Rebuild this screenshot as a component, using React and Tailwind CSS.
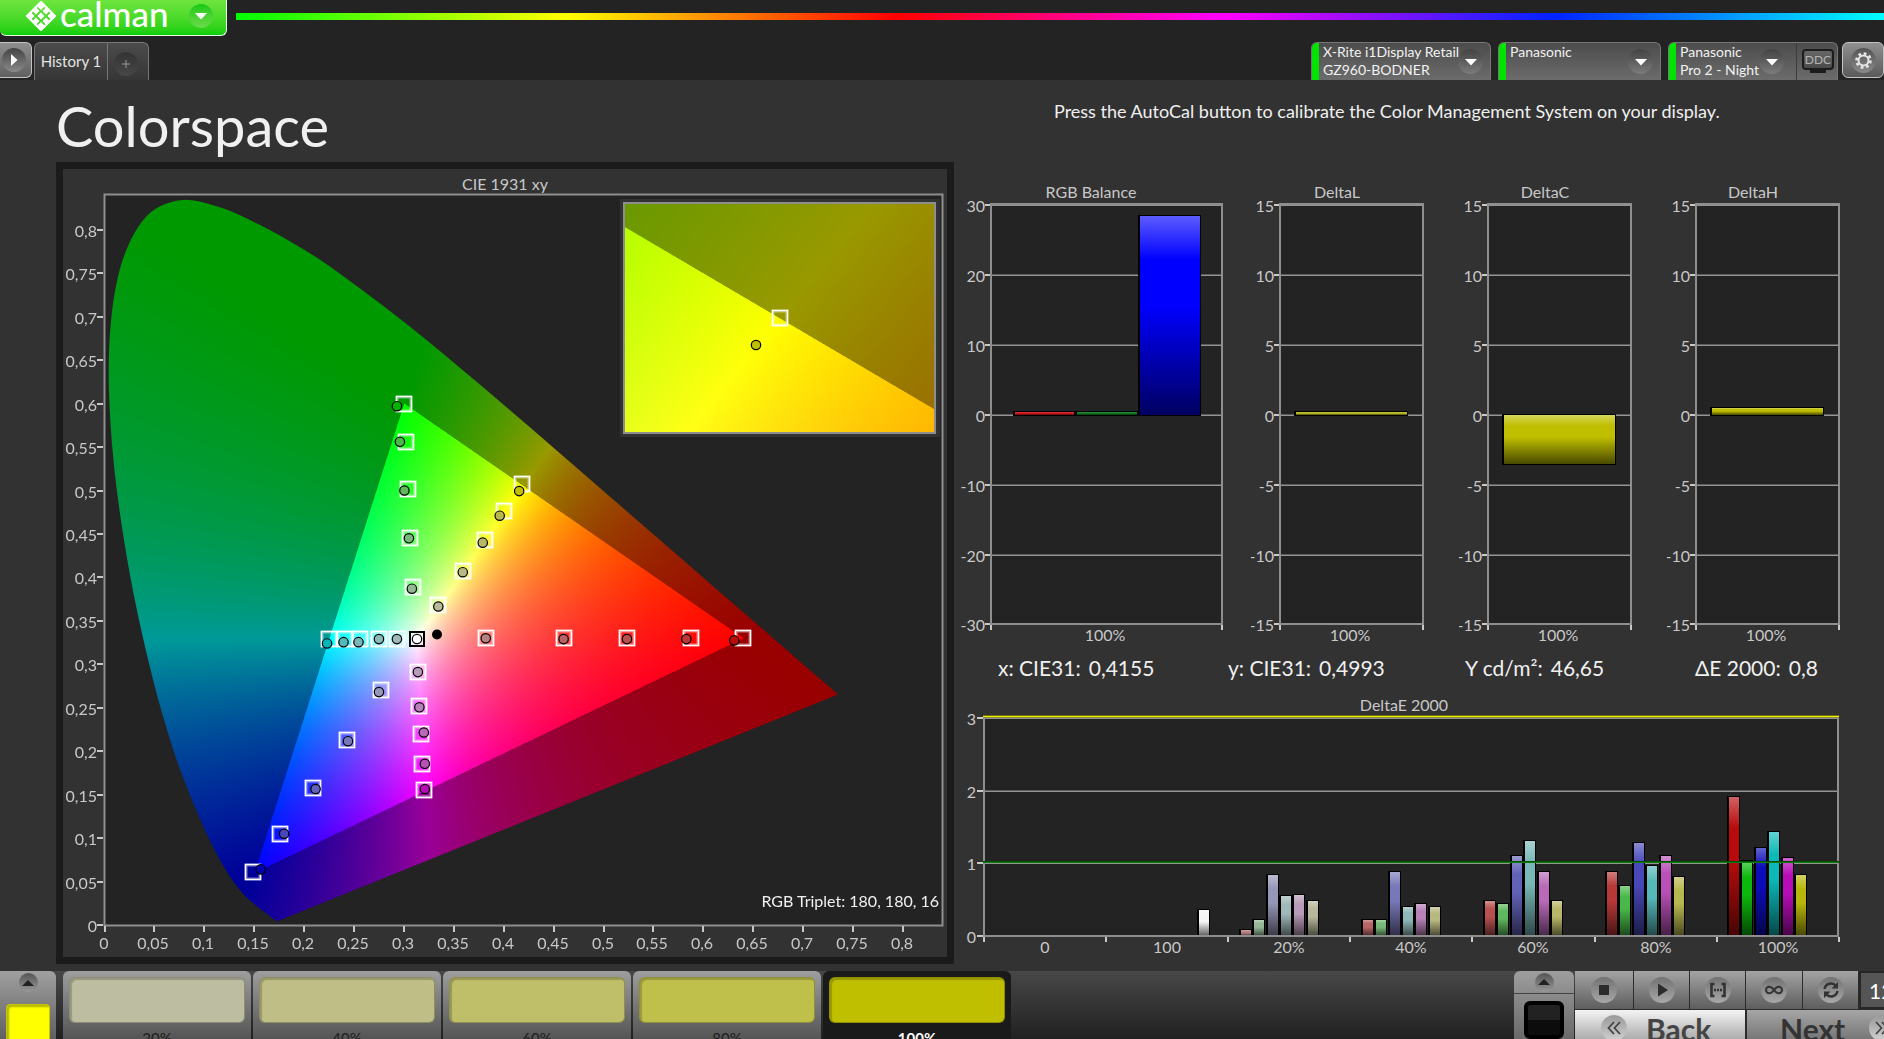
import { useEffect, useRef } from 'react';

// spectral locus, CIE 1931 2° observer
const LOCUS = [
  [0.1741, 0.005], [0.1726, 0.0048], [0.1714, 0.0051], [0.1689, 0.0069], [0.1644, 0.0109], [0.1566, 0.0177],
  [0.144, 0.0297], [0.1355, 0.0399], [0.1241, 0.0578], [0.1096, 0.0868], [0.0913, 0.1327], [0.0687, 0.2007],
  [0.0454, 0.295], [0.0235, 0.4127], [0.0082, 0.5384], [0.0039, 0.6548], [0.0139, 0.7502], [0.0389, 0.812],
  [0.0743, 0.8338], [0.1142, 0.8262], [0.1547, 0.8059], [0.1929, 0.7816], [0.2296, 0.7543], [0.3016, 0.6923],
  [0.3731, 0.6245], [0.4441, 0.5547], [0.5125, 0.4866], [0.5752, 0.4242], [0.627, 0.3725], [0.6658, 0.334],
  [0.6915, 0.3083], [0.719, 0.2809], [0.7347, 0.2653],
];

// fill, target xy, measured xy
const POINTS = [
  ['#00b400', [0.3, 0.6], [0.293, 0.597]],
  ['#48b848', [0.302, 0.556], [0.296, 0.556]],
  ['#5fb85f', [0.304, 0.502], [0.3005, 0.5]],
  ['#78b878', [0.3065, 0.445], [0.305, 0.445]],
  ['#96b896', [0.3095, 0.389], [0.308, 0.387]],
  ['#bfbf00', [0.4185, 0.507], [0.4155, 0.4993]],
  ['#b8b850', [0.4, 0.476], [0.396, 0.471]],
  ['#b8b869', [0.381, 0.443], [0.379, 0.44]],
  ['#b8b882', [0.359, 0.407], [0.359, 0.406]],
  ['#b8b89b', [0.3345, 0.368], [0.3345, 0.3665]],
  ['#b80c0c', [0.64, 0.33], [0.631, 0.3275]],
  ['#b83737', [0.5875, 0.33], [0.583, 0.329]],
  ['#b85050', [0.5235, 0.33], [0.5235, 0.329]],
  ['#b86464', [0.46, 0.33], [0.46, 0.329]],
  ['#b88282', [0.382, 0.33], [0.382, 0.33]],
  ['#00b8b8', [0.225, 0.329], [0.223, 0.324]],
  ['#55b8b8', [0.2405, 0.329], [0.2395, 0.3255]],
  ['#78b8b8', [0.256, 0.329], [0.2545, 0.3255]],
  ['#8cb8b8', [0.275, 0.329], [0.275, 0.329]],
  ['#a0b8b8', [0.293, 0.329], [0.293, 0.329]],
  ['#b89bb8', [0.314, 0.291], [0.314, 0.291]],
  ['#b882b8', [0.315, 0.252], [0.3155, 0.2505]],
  ['#b869b8', [0.317, 0.22], [0.32, 0.2215]],
  ['#b850b8', [0.318, 0.1855], [0.321, 0.1855]],
  ['#b80cb8', [0.32, 0.155], [0.321, 0.1565]],
  ['#9696b8', [0.277, 0.271], [0.275, 0.268]],
  ['#7878b8', [0.2425, 0.213], [0.244, 0.2115]],
  ['#6262b8', [0.2085, 0.158], [0.2115, 0.1565]],
  ['#4848b8', [0.176, 0.105], [0.18, 0.105]],
  ['#0000b4', [0.149, 0.061], [0.1565, 0.064]],
];

const DELTA_E = [
  { label: '0', bars: [] },
  { label: '100', bars: [[6, 0.37, '#f4f4f4']] },
  {
    label: '20%',
    bars: [[0, 0.1, '#b88282'], [1, 0.23, '#96b896'], [2, 0.85, '#9696b8'], [3, 0.56, '#a0b8b8'], [4, 0.58, '#b89bb8'], [5, 0.5, '#b8b89b']],
  },
  {
    label: '40%',
    bars: [[0, 0.23, '#b86464'], [1, 0.23, '#78b878'], [2, 0.89, '#7878b8'], [3, 0.41, '#8cb8b8'], [4, 0.45, '#b882b8'], [5, 0.41, '#b8b882']],
  },
  {
    label: '60%',
    bars: [[0, 0.5, '#b85050'], [1, 0.45, '#5fb85f'], [2, 1.11, '#6262b8'], [3, 1.32, '#78b8b8'], [4, 0.89, '#b869b8'], [5, 0.5, '#b8b869']],
  },
  {
    label: '80%',
    bars: [[0, 0.9, '#b83737'], [1, 0.7, '#48b848'], [2, 1.29, '#4848b8'], [3, 0.97, '#55b8b8'], [4, 1.12, '#b850b8'], [5, 0.83, '#b8b850']],
  },
  {
    label: '100%',
    bars: [[0, 1.93, '#b80c0c'], [1, 1.04, '#0cb80c'], [2, 1.23, '#0c0cb8'], [3, 1.44, '#0cb8b8'], [4, 1.08, '#b80cb8'], [5, 0.85, '#b8b80c']],
  },
];

const SWATCHES = [
  { label: '20%', color: 'bg-[#bdbda1]' },
  { label: '40%', color: 'bg-[#bebe86]' },
  { label: '60%', color: 'bg-[#bfbf6a]' },
  { label: '80%', color: 'bg-[#bfbf4b]' },
  { label: '100%', color: 'bg-[#bfbf00]', selected: true },
];

const comma = (n) => String(Number(n.toFixed(2))).replace('.', ',');

function GamutCanvas({ width, height, x0, x1, y0, y1 }) {
  const ref = useRef(null);

  useEffect(() => {
    const canvas = ref.current;
    const ctx = canvas.getContext('2d');
    const w = canvas.width;
    const h = canvas.height;
    const img = ctx.createImageData(w, h);
    for (let j = 0; j < h; j++) {
      const y = y1 - ((j + 0.5) / h) * (y1 - y0);
      for (let i = 0; i < w; i++) {
        const x = x0 + ((i + 0.5) / w) * (x1 - x0);
        const X = x / y;
        const Z = (1 - x - y) / y;
        let r = 3.2406 * X - 1.5372 - 0.4986 * Z;
        let g = -0.9689 * X + 1.8758 + 0.0415 * Z;
        let b = 0.0557 * X - 0.204 + 1.057 * Z;
        const inside = r >= 0 && g >= 0 && b >= 0;
        r = Math.max(r, 0);
        g = Math.max(g, 0);
        b = Math.max(b, 0);
        // colours the display can't reach are dimmed
        const k = (inside ? 255 : 153) / Math.max(r, g, b);
        const o = (j * w + i) * 4;
        img.data[o] = r * k;
        img.data[o + 1] = g * k;
        img.data[o + 2] = b * k;
        img.data[o + 3] = 255;
      }
    }
    ctx.putImageData(img, 0, 0);

    const pts = LOCUS.map(([x, y]) => [((x - x0) / (x1 - x0)) * w, ((y1 - y) / (y1 - y0)) * h]);
    ctx.globalCompositeOperation = 'destination-in';
    ctx.beginPath();
    ctx.moveTo(pts[0][0], pts[0][1]);
    for (let i = 0; i < pts.length - 1; i++) {
      const p0 = pts[Math.max(i - 1, 0)];
      const p1 = pts[i];
      const p2 = pts[i + 1];
      const p3 = pts[Math.min(i + 2, pts.length - 1)];
      ctx.bezierCurveTo(
        p1[0] + (p2[0] - p0[0]) / 6, p1[1] + (p2[1] - p0[1]) / 6,
        p2[0] - (p3[0] - p1[0]) / 6, p2[1] - (p3[1] - p1[1]) / 6,
        p2[0], p2[1],
      );
    }
    ctx.closePath();
    ctx.fill();
  }, [x0, x1, y0, y1]);

  return <canvas ref={ref} width={width * 2} height={height * 2} className="block h-full w-full" />;
}

function Target({ x, y, stroke = '#fff' }) {
  return (
    <>
      <rect x={x - 7} y={y - 7} width="14" height="14" fill="none" stroke={stroke} strokeOpacity="0.45" strokeWidth="3" />
      <rect x={x - 7.5} y={y - 7.5} width="15" height="15" fill="none" stroke={stroke} strokeWidth="1.4" />
    </>
  );
}

function Measured({ x, y, fill }) {
  return <circle cx={x} cy={y} r="4.7" fill={fill} stroke="#000" strokeWidth="1.2" />;
}

function CieChart() {
  const px = (x) => 41.5 + x * 998;
  const py = (y) => 756 - y * 869;
  const steps = Array.from({ length: 17 }, (_, i) => i * 0.05);

  return (
    <svg viewBox="0 0 884 788" className="block w-full text-[16px]" role="img" aria-label="CIE 1931 xy">
      <text x="442" y="21" textAnchor="middle" fill="#c8c8c8">CIE 1931 xy</text>
      <rect x="41" y="26" width="838" height="730" fill="#232323" />
      <foreignObject x="42" y="26" width="838" height="730">
        <GamutCanvas width={838} height={730} x0={0} x1={0.84} y0={0} y1={0.84} />
      </foreignObject>
      <rect x="41.5" y="25.5" width="838" height="731" fill="none" stroke="#8e8e8e" strokeWidth="2" />
      {steps.map((s) => (
        <g key={s} fill="#c8c8c8">
          <rect x="34" y={Math.round(py(s)) - 1} width="6" height="2" />
          <text x="34" y={Math.round(py(s)) + 7} textAnchor="end">{comma(s)}</text>
          <rect x={Math.round(px(s)) - 1} y="757" width="2" height="6" />
          <text x={Math.round(px(s)) - 1} y="780" textAnchor="middle">{comma(s)}</text>
        </g>
      ))}
      {POINTS.map(([fill, t, m]) => (
        <g key={t.join()}>
          <Target x={Math.round(px(t[0]))} y={Math.round(py(t[1]))} />
          <Measured x={px(m[0])} y={py(m[1])} fill={fill} />
        </g>
      ))}
      <rect x="347" y="463" width="14" height="14" fill="none" stroke="#000" strokeWidth="2" />
      <Measured x={354} y={470} fill="#fff" />
      <circle cx="374" cy="465.5" r="5" />

      <rect x="557" y="30" width="320" height="238" fill="#323232" />
      <foreignObject x="560" y="33" width="313" height="232">
        <GamutCanvas width={313} height={232} x0={0.3943} x1={0.4443} y0={0.4803} y1={0.5303} />
      </foreignObject>
      <rect x="561" y="34" width="311" height="230" fill="none" stroke="#8e8e8e" strokeWidth="2" />
      <Target x={717} y={149} />
      <Measured x={693} y={176} fill="#bfbf00" />
      <text x="876" y="738" textAnchor="end" fill="#f0f0f0">RGB Triplet: 180, 180, 16</text>
    </svg>
  );
}

function Gloss({ id }) {
  return (
    <defs>
      <linearGradient id={id} x1="0" y1="0" x2="0" y2="1">
        <stop offset="0" stopColor="#fff" stopOpacity="0.36" />
        <stop offset="0.22" stopColor="#fff" stopOpacity="0" />
        <stop offset="0.45" stopColor="#000" stopOpacity="0" />
        <stop offset="1" stopColor="#000" stopOpacity="0.62" />
      </linearGradient>
    </defs>
  );
}

function GlossBar({ x, y, width, height, color, gloss }) {
  return (
    <g>
      <rect x={x} y={y} width={width} height={height} fill="#000" />
      <rect x={x + 2} y={y + 1} width={width - 3} height={Math.max(height - 2, 1)} fill={color} />
      <rect x={x + 2} y={y + 1} width={width - 3} height={Math.max(height - 2, 1)} fill={`url(#${gloss})`} />
    </g>
  );
}

function GridLine({ x, y, width }) {
  return (
    <>
      <rect x={x} y={y - 1} width={width} height="1" fill="#5c5c5c" />
      <rect x={x} y={y} width={width} height="1" fill="#949494" />
    </>
  );
}

function BalanceChart({ title, width, plotWidth, max, bars }) {
  const left = width === 263 ? 31 : 29;
  const right = left + plotWidth;
  const gloss = `gloss-${title.replace(' ', '')}`;
  const rows = [0, 1, 2, 3, 4, 5, 6];

  return (
    <svg viewBox={`0 0 ${width} 470`} className="block w-full text-[16px]" role="img" aria-label={title}>
      <Gloss id={gloss} />
      <text x={Math.round(right / 2)} y="18" textAnchor="middle" fill="#c8c8c8">{title}</text>
      <rect x={left} y="24" width={plotWidth} height="420" fill="#232323" />
      {rows.map((i) => {
        const y = Math.round(25 + i * 69.9);
        return (
          <g key={i}>
            <GridLine x={left} y={y} width={plotWidth} />
            <rect x={left - 6} y={y - 1} width="6" height="2" fill="#c8c8c8" />
            <text x={left - 6} y={y + 7} textAnchor="end" fill="#c8c8c8">{max - (i * max) / 3}</text>
          </g>
        );
      })}
      <rect x={left} y="24" width={plotWidth} height="420" fill="none" stroke="#8e8e8e" strokeWidth="2" />
      {bars.map((b) => (
        <GlossBar key={b.x} {...b} x={left + b.x} gloss={gloss} />
      ))}
      <rect x={left - 1} y="445" width="2" height="5" fill="#c8c8c8" />
      <rect x={right - 1} y="445" width="2" height="5" fill="#c8c8c8" />
      <text x={left + Math.floor(plotWidth / 2) - 1} y="461" textAnchor="middle" fill="#c8c8c8">100%</text>
    </svg>
  );
}

function DeltaEChart() {
  const cat = 122.1;
  const zero = 246;
  const unit = 72.7;

  return (
    <svg viewBox="0 0 887 274" className="block w-full text-[16px]" role="img" aria-label="DeltaE 2000">
      <Gloss id="gloss-de" />
      <text x="444" y="21" textAnchor="middle" fill="#c8c8c8">DeltaE 2000</text>
      <rect x="24" y="28" width="854" height="218" fill="#232323" />
      {[0, 1, 2, 3].map((v) => {
        const y = Math.round(zero - v * unit);
        return (
          <g key={v}>
            <GridLine x={24} y={y} width={854} />
            <rect x="17" y={y - 1} width="6" height="2" fill="#c8c8c8" />
            <text x="16" y={y + 7} textAnchor="end" fill="#c8c8c8">{v}</text>
          </g>
        );
      })}
      {DELTA_E.map((group, i) =>
        group.bars.map(([slot, value, color]) => {
          const x = Math.round(23 + i * cat + 11.5 + slot * 13.4);
          const y = Math.round(zero - value * unit);
          return <GlossBar key={slot} x={x} y={y} width={13} height={zero - y + 1} color={color} gloss="gloss-de" />;
        }),
      )}
      <rect x="24" y="28" width="854" height="218" fill="none" stroke="#8e8e8e" strokeWidth="2" />
      <rect x="23" y="25" width="856" height="1" fill="#6e6e0a" />
      <rect x="23" y="26" width="856" height="1" fill="#f0f000" />
      <rect x="23" y="27" width="856" height="1" fill="#8a8a3a" />
      <rect x="23" y="171" width="856" height="1" fill="#004d00" />
      <rect x="23" y="172" width="856" height="1" fill="#087e08" />
      {[0, 1, 2, 3, 4, 5, 6, 7].map((i) => (
        <rect key={i} x={Math.round(23 + i * cat)} y="247" width="2" height="5" fill="#c8c8c8" />
      ))}
      {DELTA_E.map((group, i) => (
        <text key={group.label} x={Math.round(24 + (i + 0.5) * cat)} y="263" textAnchor="middle" fill="#c8c8c8">
          {group.label}
        </text>
      ))}
    </svg>
  );
}

function Round({ children, className = 'h-6 w-6 from-[#444] to-[#858585]' }) {
  return (
    <span className={`flex shrink-0 items-center justify-center rounded-full bg-linear-to-b ${className}`}>{children}</span>
  );
}

function Triangle({ d, size = 12, fill = '#fff' }) {
  return (
    <svg width={size} height={size} viewBox="0 0 12 12" aria-hidden="true">
      <path d={d} fill={fill} />
    </svg>
  );
}

const DOWN = 'M0 3h12L6 9.5z';
const RIGHT = 'M3 0v12l6.5-6z';
const UP = 'M0 9h12L6 3z';

function Logo() {
  const cells = [
    [15, 6.5], [10, 11], [20, 11], [5, 16], [15, 16], [25, 16], [10, 21], [20, 21], [15, 25.5],
  ];
  return (
    <svg width="30" height="30" viewBox="0 1 30 30" aria-hidden="true">
      <path
        d="M11.5 5.5 15 2l3.5 3.5M24.5 11.5 29 16l-4.5 4.5M18.5 26.5 15 30l-3.5-3.500M5.5 20.5 1 16l4.5-4.5M11.5 5.5l-6 6M18.500 5.5l6 6M24.5 20.5l-6 6M5.5 20.5l6 6"
        fill="none"
        stroke="#fff"
        strokeWidth="2.2"
      />
      {cells.map(([x, y]) => (
        <rect key={`${x}-${y}`} x={x - 2.6} y={y - 2.6} width="5.2" height="5.2" rx="0.8" fill="#fff" transform={`rotate(45 ${x} ${y})`} />
      ))}
    </svg>
  );
}

function DeviceTab({ lines, className, children }) {
  return (
    <div className={`flex h-[38px] overflow-hidden rounded-t-md border border-b-0 border-[#777] bg-linear-to-b from-[#4c4c4c] to-[#6c6c6c] ${className}`}>
      <button type="button" className="flex min-w-0 flex-1 items-center pr-[7px] text-left">
        <span className="h-full w-[7px] shrink-0 bg-[#00e400]" />
        <span className="flex h-full min-w-0 flex-1 flex-col pl-1 text-[14px] leading-[18px] whitespace-nowrap text-[#f2f2f2]">
          {lines.map((line) => (
            <span key={line}>{line}</span>
          ))}
        </span>
        <Round className="h-[25px] w-[25px] from-[#434343] to-[#7c7c7c]">
          <Triangle d={DOWN} />
        </Round>
      </button>
      {children}
    </div>
  );
}

function Header() {
  return (
    <header className="flex h-[81px] flex-col bg-[#232323]">
      <div className="flex h-[42px] items-start gap-[9px]">
        <button
          type="button"
          aria-label="calman menu"
          className="flex h-[36px] w-[227px] shrink-0 items-center rounded-b-md border-r border-b border-[#e8ffe8] bg-linear-to-b from-[#6ee53f] to-[#08cf08] pb-1 pl-[26px]"
        >
          <Logo />
          <span className="flex h-8 w-[128px] items-center pb-[6px] pl-1 text-[35px] leading-8 font-medium text-white">calman</span>
          <Round className="ml-[5px] h-6 w-6 from-[#0fc80f] to-[#68dc48]">
            <Triangle d={DOWN} />
          </Round>
        </button>
        <div className="mt-[13px] h-[7px] flex-1 bg-[linear-gradient(90deg,#0f0,#ff0,#f00,#f0f,#02f,#0ff)]" />
      </div>
      <div className="flex h-[38px] items-start">
        <button
          type="button"
          aria-label="Expand"
          className="flex h-9 w-8 items-center justify-center rounded-r-md border border-l-0 border-[#c4c4c4] bg-linear-to-b from-[#8e8e8e] to-[#606060] pr-1"
        >
          <Round className="h-6 w-6 from-[#454545] to-[#8a8a8a]">
            <Triangle d={RIGHT} />
          </Round>
        </button>
        <div className="ml-[2px] flex h-[38px] rounded-t-md border border-b-0 border-[#777] bg-linear-to-b from-[#4b4b4b] to-[#363636]">
          <button type="button" className="w-[73px] border-r border-[#777] text-center text-[15px] whitespace-nowrap text-[#e4e4e4]">
            History 1
          </button>
          <button type="button" aria-label="Add history" className="flex w-10 items-center justify-center pt-1 pr-1">
            <Round className="h-6 w-6 from-[#333] to-[#484848]">
              <svg width="8" height="8" viewBox="0 0 8 8" aria-hidden="true">
                <path d="M4 0v8M0 4h8" stroke="#999" strokeWidth="1" />
              </svg>
            </Round>
          </button>
        </div>
        <div className="ml-auto flex items-start gap-[7px]">
          <DeviceTab className="w-[180px]" lines={['X-Rite i1Display Retail', 'GZ960-BODNER']} />
          <DeviceTab className="w-[163px]" lines={['Panasonic']} />
          <div className="flex items-start gap-1">
            <DeviceTab className="w-[170px]" lines={['Panasonic', 'Pro 2 - Night']}>
              <button type="button" className="ml-[5px] flex w-[41px] items-center justify-center border-l border-[#3c3c3c] pl-[2px]">
                <span className="relative mb-1 flex h-[21px] w-8 items-center justify-center rounded-sm border-2 border-[#1c1c1c] bg-linear-to-b from-[#686868] to-[#4a4a4a] text-[12px] leading-none text-[#b4b4b4]">
                  DDC
                  <span className="absolute -bottom-[5px] h-[3px] w-4 bg-[#1c1c1c]" />
                </span>
              </button>
            </DeviceTab>
            <button
              type="button"
              aria-label="Settings"
              className="flex h-9 w-[42px] items-center justify-center rounded-md border border-[#c4c4c4] bg-linear-to-b from-[#909090] to-[#5a5a5a]"
            >
              <Round className="h-[25px] w-[25px] from-[#555] to-[#8a8a8a]">
                <svg width="17" height="17" viewBox="0 0 17 17" aria-hidden="true">
                  <circle cx="8.5" cy="8.5" r="7" fill="none" stroke="#e6e6e6" strokeWidth="2.6" strokeDasharray="2.75 2.75" />
                  <circle cx="8.5" cy="8.5" r="5" fill="none" stroke="#e6e6e6" strokeWidth="2" />
                </svg>
              </Round>
            </button>
          </div>
        </div>
      </div>
    </header>
  );
}

function Readouts() {
  return (
    <dl className="grid h-9 grid-cols-[230fr_237fr_230fr_152fr] items-center pl-[38px] text-[21px] whitespace-nowrap text-[#f0f0f0]">
      {[
        ['x: CIE31:', '0,4155'],
        ['y: CIE31:', '0,4993'],
        ['Y cd/m²:', '46,65'],
        ['ΔE 2000:', '0,8'],
      ].map(([name, value]) => (
        <div key={name} className="flex gap-2">
          <dt>{name}</dt>
          <dd>{value}</dd>
        </div>
      ))}
    </dl>
  );
}

function TransportButton({ label, children }) {
  return (
    <button
      type="button"
      aria-label={label}
      className="flex h-[38px] items-center justify-center bg-linear-to-b from-[#a4a4a4] to-[#5e5e5e]"
    >
      <Round className="h-[26px] w-[26px] from-[#727272] to-[#a8a8a8]">
        <svg width="20" height="20" viewBox="0 0 20 20" fill="none" stroke="#333" strokeWidth="2" aria-hidden="true">
          {children}
        </svg>
      </Round>
    </button>
  );
}

function Chevrons({ d }) {
  return (
    <Round className="h-[26px] w-[26px] from-[#9a9a9a] to-[#d0d0d0]">
      <svg width="16" height="16" viewBox="0 0 16 16" fill="none" stroke="#444" strokeWidth="1.8" aria-hidden="true">
        <path d={d} />
      </svg>
    </Round>
  );
}

function Footer() {
  return (
    <footer className="flex h-[110px] shrink-0 items-stretch bg-linear-to-b from-[#484848] from-0% to-[#1c1c1c] to-70%">
      <div className="flex w-14 shrink-0 flex-col items-center rounded-tr-md bg-linear-to-b from-[#a0a0a0] to-[#3c3c3c] px-[6px] pt-[2px]">
        <button type="button" aria-label="Show pattern">
          <Round className="h-[19px] w-[19px] from-[#555] to-[#999]">
            <Triangle d={UP} fill="#222" />
          </Round>
        </button>
        <div className="mt-3 h-20 w-full rounded-sm border border-[#c6c600] bg-[#ff0] shadow-[inset_2px_2px_2px_#b4b400]" />
      </div>
      <div className="ml-[7px] flex gap-[2px]">
        {SWATCHES.map((s) => (
          <button
            key={s.label}
            type="button"
            className={
              s.selected
                ? 'w-[188px] rounded-t-md bg-[#1a1a1a] px-[6px] text-white'
                : 'w-[188px] rounded-t-md bg-linear-to-b from-[#9e9e9e] to-[#2c2c2c] px-[6px] text-[#222]'
            }
          >
            <span className="flex h-full flex-col pt-[6px]">
              <span className={`h-[46px] w-full rounded-md border border-black/25 shadow-[inset_2px_2px_1px_rgba(0,0,0,0.2)] ${s.color}`} />
              <span className={s.selected ? 'mt-1 text-[15px] font-bold' : 'mt-1 text-[15px] font-medium'}>{s.label}</span>
            </span>
          </button>
        ))}
      </div>
      <div className="ml-auto flex shrink-0">
        <div className="mr-px flex w-[60px] flex-col rounded-t-md bg-linear-to-b from-[#9e9e9e] to-[#4a4a4a]">
          <button type="button" aria-label="Show source" className="flex h-[23px] items-center justify-center border-b border-[#444]">
            <Round className="h-[19px] w-[19px] from-[#555] to-[#999]">
              <Triangle d={UP} fill="#222" />
            </Round>
          </button>
          <div className="mx-auto mt-[7px] h-[38px] w-10 rounded-md border-4 border-black bg-linear-to-b from-[#222] from-50% to-[#0c0c0c] to-50%" />
        </div>
        <div className="flex w-[309px] flex-col gap-px bg-[#2c2c2c]">
          <div className="grid h-[38px] grid-cols-[58px_55px_55px_56px_55px_25px] gap-px">
            <TransportButton label="Stop">
              <path d="M5 5h10v10H5z" fill="#2c2c2c" stroke="none" />
            </TransportButton>
            <TransportButton label="Play">
              <path d="M6 3.5v13l10-6.5z" fill="#2c2c2c" stroke="none" />
            </TransportButton>
            <TransportButton label="Read series">
              <path d="M6.5 4H3.5v12h3M13.5 4h3v12h-3" strokeWidth="2.6" />
              <path d="M6 10h2M9 10h2M12 10h2" strokeWidth="2.4" />
            </TransportButton>
            <TransportButton label="Read continuously">
              <path d="M10 10C8 7.2 6.8 6.8 5.2 6.8a3.200 3.200 0 0 0 0 6.400C6.800 13.200 8 12.800 10 10s3.200-3.200 4.800-3.200a3.200 3.200 0 0 1 0 6.400C13.200 13.200 12 12.800 10 10z" />
            </TransportButton>
            <TransportButton label="Refresh">
              <path d="M3.5 9A6.5 6.5 0 0 1 15 6M16.5 11A6.5 6.5 0 0 1 5 14" strokeWidth="2.4" />
              <path d="M17 2v6.5h-6.500zM3 18v-6.500h6.500z" fill="#333" stroke="none" />
            </TransportButton>
            <input
              aria-label="Level"
              readOnly
              value="12"
              className="h-[38px] w-16 border-2 border-[#262626] bg-[#555] pl-2 text-[21px] text-white"
            />
          </div>
          <div className="flex gap-[2px]">
            <button
              type="button"
              className="flex h-12 w-[170px] shrink-0 items-start gap-[19px] bg-linear-to-b from-[#f4f4f4] to-[#808080] pt-[5px] pl-[26px] text-[30px] leading-7 font-bold text-[#444]"
            >
              <Chevrons d="M8 2 2.5 8 8 14M14 2 8.5 8l5.5 6" />
              Back
            </button>
            <button
              type="button"
              className="flex h-12 w-[170px] shrink-0 items-start gap-6 bg-linear-to-b from-[#a6a6a6] to-[#5a5a5a] pt-[5px] pl-[33px] text-[30px] leading-7 font-bold text-[#333]"
            >
              Next
              <Chevrons d="M2 2l5.5 6L2 14M8 2l5.5 6L8 14" />
            </button>
          </div>
        </div>
      </div>
    </footer>
  );
}

export default function App() {
  return (
    <div className="flex h-screen flex-col overflow-hidden bg-[#323232] font-['Lato','Open_Sans',sans-serif]">
      <Header />
      <main className="grid shrink-0 grid-cols-[898fr_924fr] gap-x-[6px] pb-[7px] pl-14">
        <section>
          <h1 className="h-[82px] pt-3 text-[56px] leading-[68px] text-[#f0f0f0]">Colorspace</h1>
          <div className="border-[7px] border-[#1b1b1b]">
            <CieChart />
          </div>
        </section>
        <section className="pr-[37px]">
          <p className="h-[100px] pt-[17px] pl-[94px] text-[18px] leading-7 whitespace-nowrap text-[#f0f0f0]">
            Press the AutoCal button to calibrate the Color Management System on your display.
          </p>
          <div className="grid grid-cols-[263fr_180fr_180fr_180fr] gap-x-7">
            <BalanceChart
              title="RGB Balance"
              width={263}
              plotWidth={231}
              max={30}
              bars={[
                { x: 22, y: 231, width: 62, height: 5, color: '#d01818' },
                { x: 84, y: 231, width: 63, height: 5, color: '#0f7a1c' },
                { x: 147, y: 35, width: 63, height: 201, color: '#0000ff' },
              ]}
            />
            <BalanceChart title="DeltaL" width={180} plotWidth={143} max={15} bars={[{ x: 14, y: 231, width: 114, height: 5, color: '#b8b820' }]} />
            <BalanceChart title="DeltaC" width={180} plotWidth={143} max={15} bars={[{ x: 14, y: 234, width: 114, height: 51, color: '#bfbf00' }]} />
            <BalanceChart title="DeltaH" width={180} plotWidth={143} max={15} bars={[{ x: 14, y: 227, width: 114, height: 9, color: '#bfbf00' }]} />
          </div>
          <Readouts />
          <div className="pt-1">
            <DeltaEChart />
          </div>
        </section>
      </main>
      <Footer />
    </div>
  );
}
